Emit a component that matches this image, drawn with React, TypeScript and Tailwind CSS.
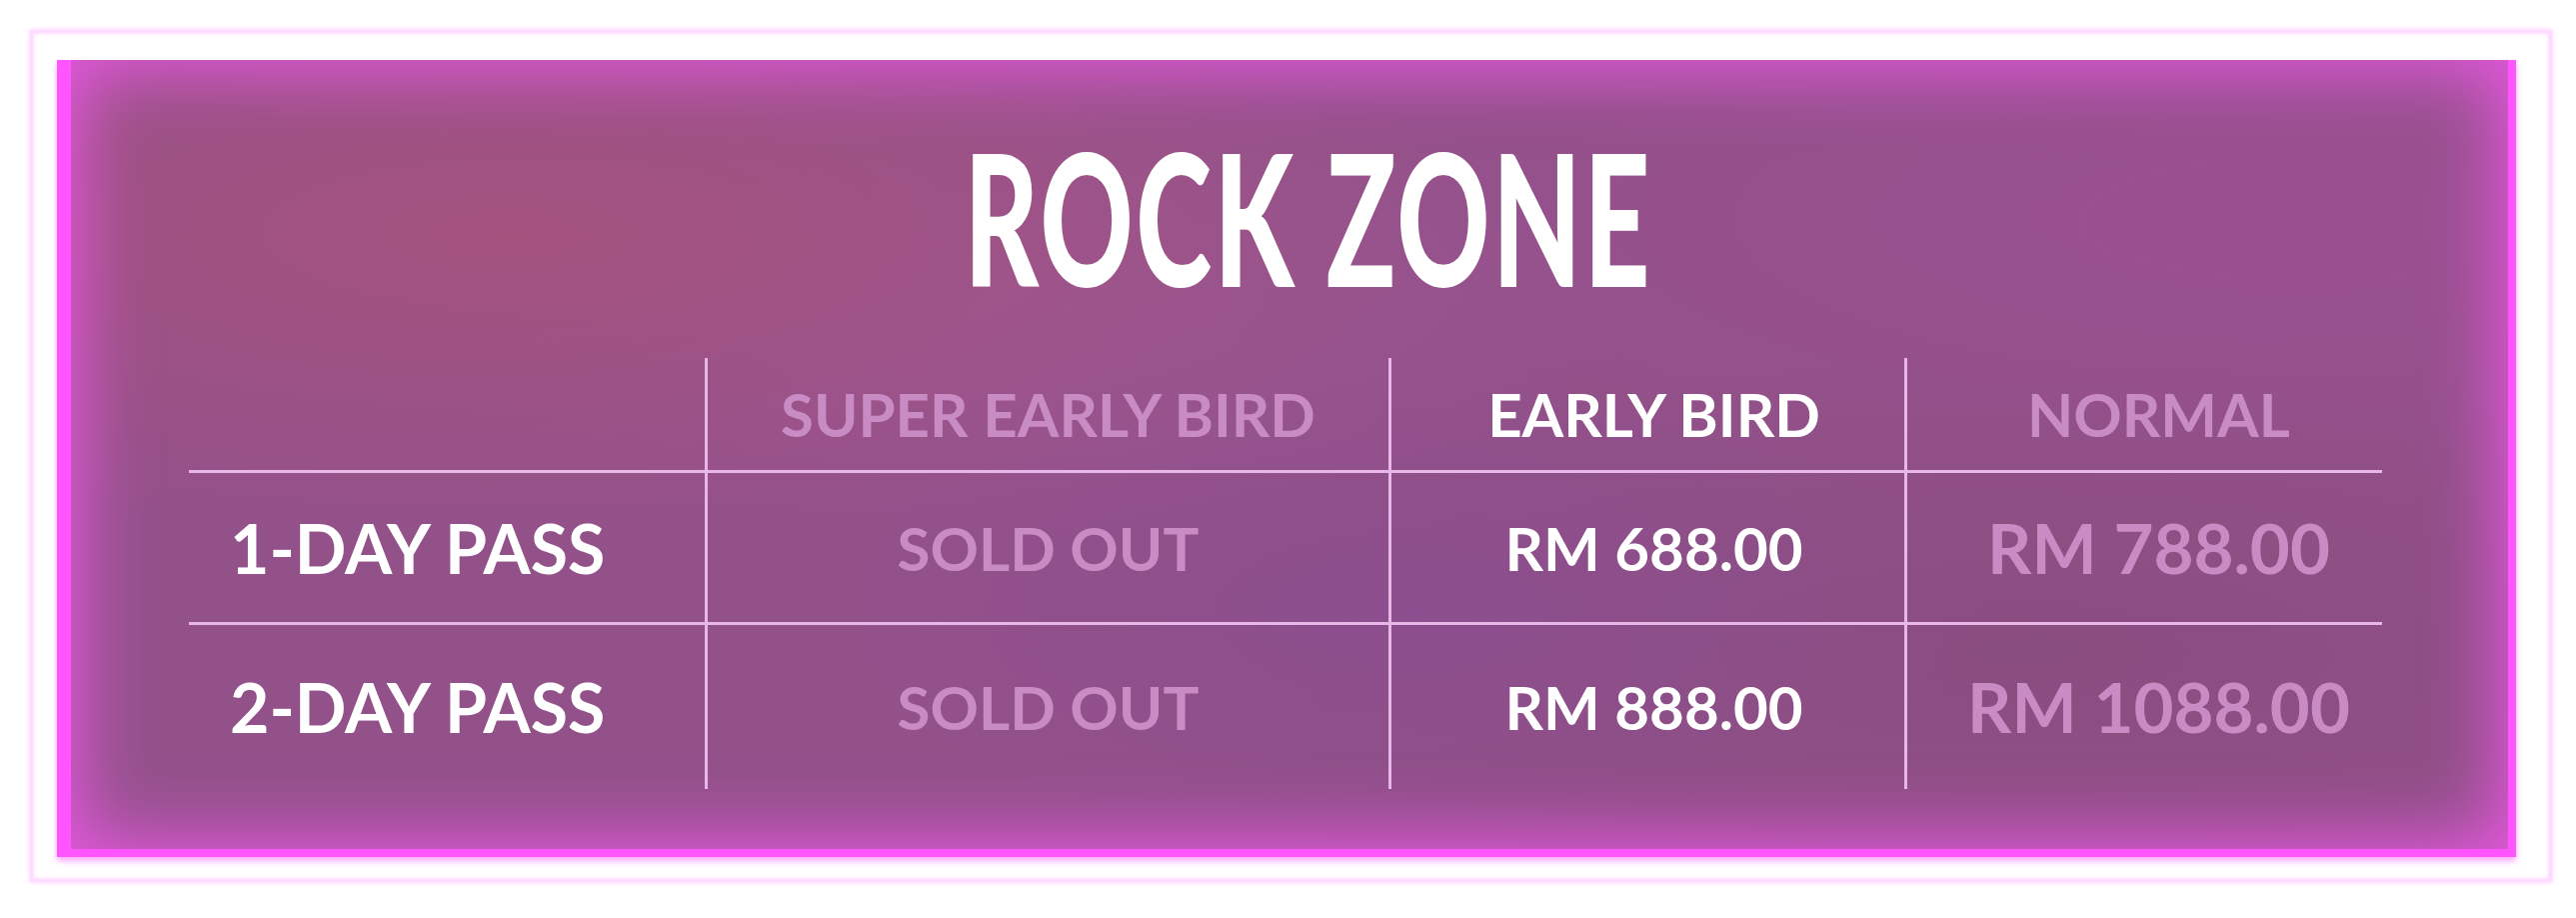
const headers = [
  { label: "SUPER EARLY BIRD", active: false, pad: "" },
  { label: "EARLY BIRD", active: true, pad: "pl-[12px]" },
  { label: "NORMAL", active: false, pad: "pl-[28px]" },
];

const rows = [
  { pass: "1-DAY PASS", prices: ["SOLD OUT", "RM 688.00", "RM 788.00"], h: "h-[152px]" },
  { pass: "2-DAY PASS", prices: ["SOLD OUT", "RM 888.00", "RM 1088.00"], h: "h-[164px]" },
];

const priceSize = ["text-[60px]", "text-[60px] pl-[12px]", "text-[69px] pl-[28px]"];

export default function App() {
  return (
    <div className="w-[2577px] h-[918px] bg-white pt-[30px] pl-[30px] font-['Lato',_'Liberation_Sans',_sans-serif]">
      <div className="w-[2523px] h-[852px] border-[3px] border-[#ffdcff] shadow-[0_0_5px_#ffc8ff,inset_0_0_5px_#ffd0ff] pt-[27px] pl-[24px]">
        <div className="w-[2460px] h-[797px] border-l-[14px] border-r-[8px] border-b-[8px] border-[#ff55ff] bg-[#93518a] bg-[radial-gradient(ellipse_at_18%_22%,#a4527e_0%,transparent_35%),radial-gradient(ellipse_at_38%_30%,#9a5694_0%,transparent_30%),radial-gradient(ellipse_at_55%_70%,#8c4e8e_0%,transparent_30%),radial-gradient(ellipse_at_80%_75%,#8a4d80_0%,transparent_35%),radial-gradient(ellipse_at_92%_20%,#9a5090_0%,transparent_30%)] shadow-[inset_0_0_70px_10px_#e558df,0_4px_6px_rgba(255,130,255,0.7)]">
          <div className="flex justify-center pt-[64px] pl-[38px]">
            <h1 className="text-[184px] leading-none font-black text-white scale-x-[0.625] tracking-[4px] whitespace-nowrap">
              ROCK ZONE
            </h1>
          </div>

          <div className="ml-[118px] mt-[50px] grid grid-cols-[516px_684px_516px_478px]">
            <div className="h-[115px] border-b-[3px] border-[#e9b6e8]" />
            {headers.map((h) => (
              <div
                key={h.label}
                className={`h-[115px] border-b-[3px] border-l-[3px] border-[#e9b6e8] flex items-center justify-center text-[60px] font-bold whitespace-nowrap ${h.pad} ${
                  h.active ? "text-white" : "text-[#c98bc4]"
                }`}
              >
                {h.label}
              </div>
            ))}

            {rows.map((r, i) => (
              <div key={r.pass} className="contents">
                <div
                  className={`${r.h} ${i === 0 ? "border-b-[3px]" : ""} border-[#e9b6e8] flex items-center pl-[41px] text-[68px] font-bold text-white whitespace-nowrap`}
                >
                  {r.pass}
                </div>
                {r.prices.map((p, j) => (
                  <div
                    key={j}
                    className={`${r.h} ${i === 0 ? "border-b-[3px]" : ""} border-l-[3px] border-[#e9b6e8] flex items-center justify-center font-bold whitespace-nowrap ${priceSize[j]} ${
                      j === 1 ? "text-white" : "text-[#c98bc4]"
                    }`}
                  >
                    {p}
                  </div>
                ))}
              </div>
            ))}
          </div>
        </div>
      </div>
    </div>
  );
}
